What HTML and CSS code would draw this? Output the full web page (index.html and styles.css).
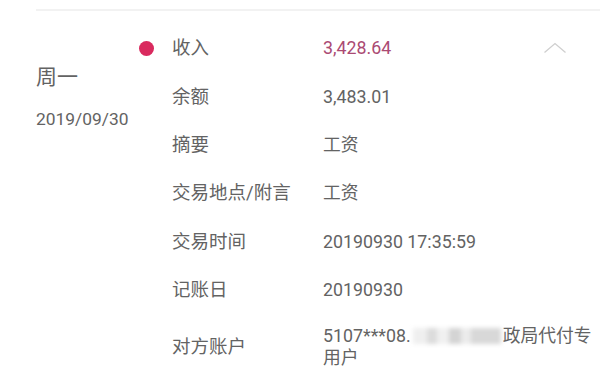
FILE: index.html
```html
<!DOCTYPE html>
<html lang="zh-CN">
  <head>
    <meta charset="UTF-8" />
    <meta name="viewport" content="width=device-width, initial-scale=1.0" />
    <title>交易明细</title>
    <link rel="stylesheet" href="styles.css">
  </head>
  <body>
    <div class="record">
      <div class="divider"></div>
      <div class="day">
        <div class="date">
          <div class="weekday">周一</div>
          <div class="date-text">2019/09/30</div>
        </div>
        <div class="items">
          <div class="row">
            <div class="mark"><span class="dot"></span></div>
            <div class="label">收入</div>
            <div class="value amount">3,428.64</div>
            <svg class="toggle" width="24" height="12" viewBox="0 0 24 12">
              <polyline points="1.5,10.5 12,1.5 22.5,10.5" fill="none" stroke="#cfcfcf" stroke-width="1.3" />
            </svg>
          </div>
          <div class="row">
            <div class="mark"></div>
            <div class="label">余额</div>
            <div class="value">3,483.01</div>
          </div>
          <div class="row">
            <div class="mark"></div>
            <div class="label">摘要</div>
            <div class="value">工资</div>
          </div>
          <div class="row">
            <div class="mark"></div>
            <div class="label">交易地点/附言</div>
            <div class="value">工资</div>
          </div>
          <div class="row">
            <div class="mark"></div>
            <div class="label">交易时间</div>
            <div class="value">20190930 17:35:59</div>
          </div>
          <div class="row">
            <div class="mark"></div>
            <div class="label">记账日</div>
            <div class="value">20190930</div>
          </div>
          <div class="row row-tall">
            <div class="mark"></div>
            <div class="label">对方账户</div>
            <div class="value">5107***08.<span class="masked"></span>政局代付专<br>用户</div>
          </div>
        </div>
      </div>
    </div>
  </body>
</html>
```

FILE: styles.css
```css
body {
  margin: 0;
  background: #fff;
  font-family: Roboto, "Noto Sans CJK SC", sans-serif;
  color: #636363;
}

.record {
  padding: 9px 0 0 36px;
}

.divider {
  height: 2px;
  background: #f2f2f2;
}

.day {
  display: flex;
  margin-top: 13px;
}

.date {
  width: 100px;
  padding-top: 39px;
}

.weekday {
  font-size: 21px;
  line-height: 28px;
}

.date-text {
  margin-top: 16px;
  font-size: 17.4px;
  line-height: 24px;
}

.items {
  flex: 1;
}

.row {
  display: flex;
  align-items: center;
  height: 48.4px;
}

.row-tall {
  height: 66px;
}

.mark {
  width: 36px;
  display: flex;
  align-items: center;
}

.dot {
  width: 15px;
  height: 15px;
  margin-left: 2.5px;
  border-radius: 50%;
  background: #d92a5e;
}

.label {
  width: 151px;
  font-size: 18.5px;
  line-height: 22px;
}

.value {
  flex: 1;
  font-size: 17.8px;
  line-height: 22px;
}

.amount {
  color: #ab4a73;
}

.toggle {
  margin-right: 33px;
}

.masked {
  display: inline-block;
  width: 88px;
  height: 16px;
  vertical-align: -2px;
  margin: 0 2px;
  background:
    linear-gradient(90deg,
      #efefef 0, #efefef 14px,
      #dcdcdc 14px, #dcdcdc 24px,
      #f0f0f0 24px, #f0f0f0 36px,
      #d4d4d4 36px, #d4d4d4 48px,
      #ebebeb 48px, #ebebeb 58px,
      #d8d8d8 58px, #d8d8d8 88px);
  filter: blur(2px);
}
```
